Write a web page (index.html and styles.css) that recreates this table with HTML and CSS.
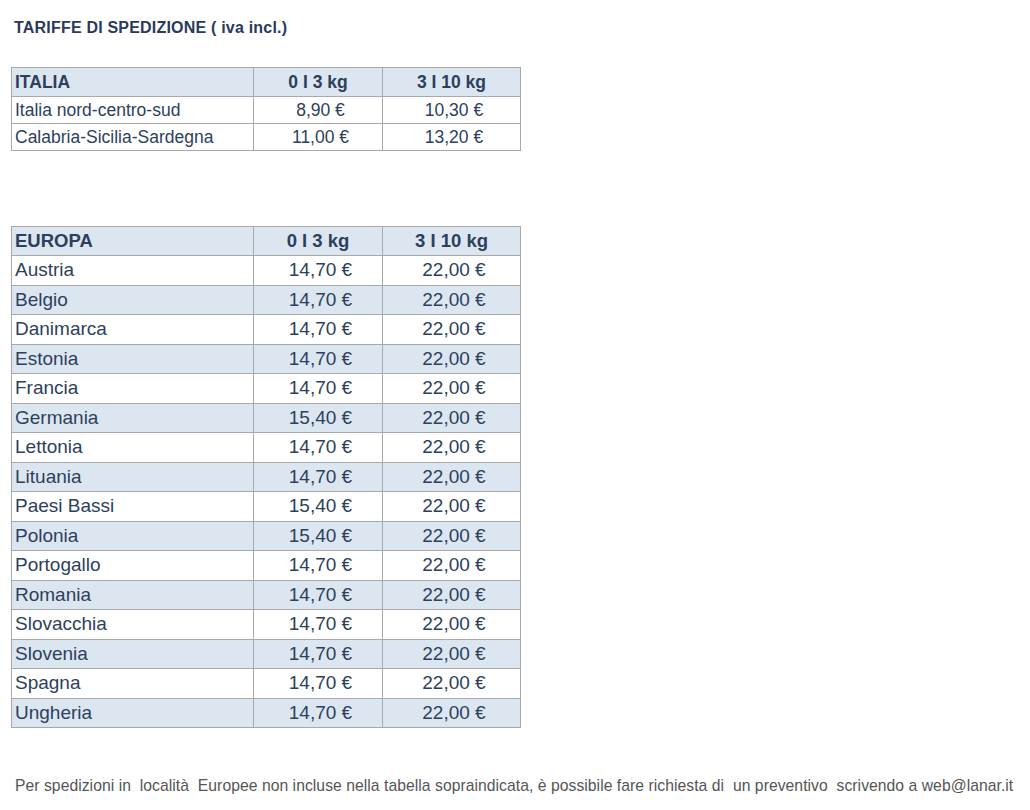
FILE: index.html
```html
<!DOCTYPE html>
<html lang="it">
<head>
<meta charset="utf-8">
<title>Tariffe di spedizione</title>
<link rel="stylesheet" href="styles.css">
</head>
<body>
<div class="page">
  <h1 class="title">TARIFFE DI SPEDIZIONE ( iva incl.)</h1>

  <table class="rates rates-it">
    <colgroup><col class="c1"><col class="c2"><col class="c3"></colgroup>
    <thead>
      <tr><th class="name">ITALIA</th><th>0 I 3 kg</th><th>3 I 10 kg</th></tr>
    </thead>
    <tbody>
      <tr><td class="name">Italia nord-centro-sud</td><td>8,90 €</td><td>10,30 €</td></tr>
      <tr><td class="name">Calabria-Sicilia-Sardegna</td><td>11,00 €</td><td>13,20 €</td></tr>
    </tbody>
  </table>

  <table class="rates rates-eu">
    <colgroup><col class="c1"><col class="c2"><col class="c3"></colgroup>
    <thead>
      <tr><th class="name">EUROPA</th><th>0 I 3 kg</th><th>3 I 10 kg</th></tr>
    </thead>
    <tbody>
      <tr><td class="name">Austria</td><td>14,70 €</td><td>22,00 €</td></tr>
      <tr class="alt"><td class="name">Belgio</td><td>14,70 €</td><td>22,00 €</td></tr>
      <tr><td class="name">Danimarca</td><td>14,70 €</td><td>22,00 €</td></tr>
      <tr class="alt"><td class="name">Estonia</td><td>14,70 €</td><td>22,00 €</td></tr>
      <tr><td class="name">Francia</td><td>14,70 €</td><td>22,00 €</td></tr>
      <tr class="alt"><td class="name">Germania</td><td>15,40 €</td><td>22,00 €</td></tr>
      <tr><td class="name">Lettonia</td><td>14,70 €</td><td>22,00 €</td></tr>
      <tr class="alt"><td class="name">Lituania</td><td>14,70 €</td><td>22,00 €</td></tr>
      <tr><td class="name">Paesi Bassi</td><td>15,40 €</td><td>22,00 €</td></tr>
      <tr class="alt"><td class="name">Polonia</td><td>15,40 €</td><td>22,00 €</td></tr>
      <tr><td class="name">Portogallo</td><td>14,70 €</td><td>22,00 €</td></tr>
      <tr class="alt"><td class="name">Romania</td><td>14,70 €</td><td>22,00 €</td></tr>
      <tr><td class="name">Slovacchia</td><td>14,70 €</td><td>22,00 €</td></tr>
      <tr class="alt"><td class="name">Slovenia</td><td>14,70 €</td><td>22,00 €</td></tr>
      <tr><td class="name">Spagna</td><td>14,70 €</td><td>22,00 €</td></tr>
      <tr class="alt"><td class="name">Ungheria</td><td>14,70 €</td><td>22,00 €</td></tr>
    </tbody>
  </table>

  <p class="note">Per spedizioni in&nbsp; località&nbsp; Europee non incluse nella tabella sopraindicata, è possibile fare richiesta di&nbsp; un preventivo&nbsp; scrivendo a web@lanar.it</p>
</div>
</body>
</html>
```

FILE: styles.css
```css
html, body {
  margin: 0;
  padding: 0;
  background: #ffffff;
}

.page {
  width: 1030px;
  height: 810px;
  padding: 20px 0 0 14px;
  box-sizing: border-box;
  font-family: "Liberation Sans", Arial, Helvetica, sans-serif;
  color: #2e3f5c;
}

.title {
  margin: 0;
  font-size: 16px;
  line-height: 16px;
  font-weight: bold;
  letter-spacing: 0.2px;
  color: #2a3a58;
}

.rates {
  border-collapse: collapse;
  margin-left: -3px;
  table-layout: fixed;
  width: 509px;
}

.rates col.c1 { width: 242px; }
.rates col.c2 { width: 129px; }
.rates col.c3 { width: 138px; }

.rates th,
.rates td {
  border: 1px solid #a9a9a9;
  padding: 0 3px;
  text-align: center;
  white-space: nowrap;
}

.rates td:not(.name) {
  padding-left: 8px;
}

.rates .name {
  text-align: left;
}

.rates thead tr,
.rates tr.alt {
  background: #dce6f1;
}

.rates th {
  font-weight: bold;
}

.rates-it {
  margin-top: 31px;
}

.rates-it th {
  height: 28px;
  font-size: 17.5px;
}

.rates-it td {
  height: 26px;
  font-size: 17.5px;
}

.rates-eu {
  margin-top: 75px;
}

.rates-eu th {
  height: 28px;
  font-size: 18.5px;
}

.rates-eu td {
  height: 28.5px;
  font-size: 19px;
}

.note {
  margin: 49px 0 0 1px;
  font-size: 15.7px;
  color: #555555;
  letter-spacing: 0.05px;
  white-space: nowrap;
}
```
